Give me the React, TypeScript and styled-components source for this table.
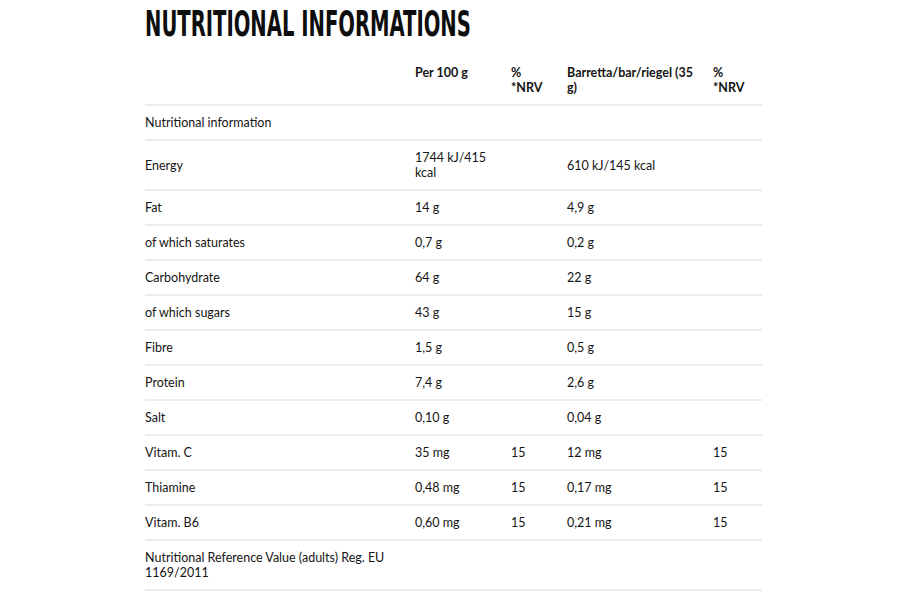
import React from "react";
import styled, { createGlobalStyle } from "styled-components";

const Global = createGlobalStyle`
  html, body { margin: 0; padding: 0; background: #fff; }
  body { font-family: Lato, "Liberation Sans", sans-serif; color: #141414; }
`;

const Page = styled.div`
  width: 910px;
  display: flex;
  justify-content: flex-start;
  padding: 7px 0 0 145px;
  box-sizing: border-box;
`;

const Section = styled.section`
  width: 617px;
  display: flex;
  flex-direction: column;
  align-items: flex-start;
`;

const Title = styled.h2`
  margin: 0 0 15px 0;
  font-family: "Liberation Sans Narrow", "DejaVu Sans Condensed", sans-serif;
  font-weight: 700;
  font-size: 36px;
  line-height: 34px;
  color: #0d0d0d;
  text-transform: uppercase;
  white-space: nowrap;
  transform: scaleX(0.605);
  transform-origin: left center;
`;

const Table = styled.table`
  width: 617px;
  border-collapse: collapse;
  table-layout: fixed;
  font-size: 12.5px;
  line-height: 15px;
`;

const Row = styled.tr`
  border-bottom: 2px solid #ececec;
`;

const Cell = styled.td`
  padding: 9px 14px 9px 0;
  vertical-align: middle;
  text-align: left;
  font-weight: 400;
`;

const Head = styled.th`
  padding: 9px 14px 9px 0;
  vertical-align: top;
  text-align: left;
  font-weight: 700;
`;

type R = [string, string, string, string, string];

const rows: R[] = [
  ["Nutritional information", "", "", "", ""],
  ["Energy", "1744 kJ/415 kcal", "", "610 kJ/145 kcal", ""],
  ["Fat", "14 g", "", "4,9 g", ""],
  ["of which saturates", "0,7 g", "", "0,2 g", ""],
  ["Carbohydrate", "64 g", "", "22 g", ""],
  ["of which sugars", "43 g", "", "15 g", ""],
  ["Fibre", "1,5 g", "", "0,5 g", ""],
  ["Protein", "7,4 g", "", "2,6 g", ""],
  ["Salt", "0,10 g", "", "0,04 g", ""],
  ["Vitam. C", "35 mg", "15", "12 mg", "15"],
  ["Thiamine", "0,48 mg", "15", "0,17 mg", "15"],
  ["Vitam. B6", "0,60 mg", "15", "0,21 mg", "15"],
];

export default function App() {
  return (
    <>
      <Global />
      <Page>
        <Section>
          <Title>Nutritional Informations</Title>
          <Table>
            <colgroup>
              <col style={{ width: 270 }} />
              <col style={{ width: 96 }} />
              <col style={{ width: 56 }} />
              <col style={{ width: 146 }} />
              <col style={{ width: 49 }} />
            </colgroup>
            <thead>
              <Row>
                <Head></Head>
                <Head>Per 100 g</Head>
                <Head>% *NRV</Head>
                <Head>Barretta/bar/riegel (35 g)</Head>
                <Head>% *NRV</Head>
              </Row>
            </thead>
            <tbody>
              {rows.map((r) => (
                <Row key={r[0]}>
                  {r.map((c, i) => (
                    <Cell key={i}>{c}</Cell>
                  ))}
                </Row>
              ))}
              <Row>
                <Cell>Nutritional Reference Value (adults) Reg. EU 1169/2011</Cell>
                <Cell></Cell>
                <Cell></Cell>
                <Cell></Cell>
                <Cell></Cell>
              </Row>
            </tbody>
          </Table>
        </Section>
      </Page>
    </>
  );
}
